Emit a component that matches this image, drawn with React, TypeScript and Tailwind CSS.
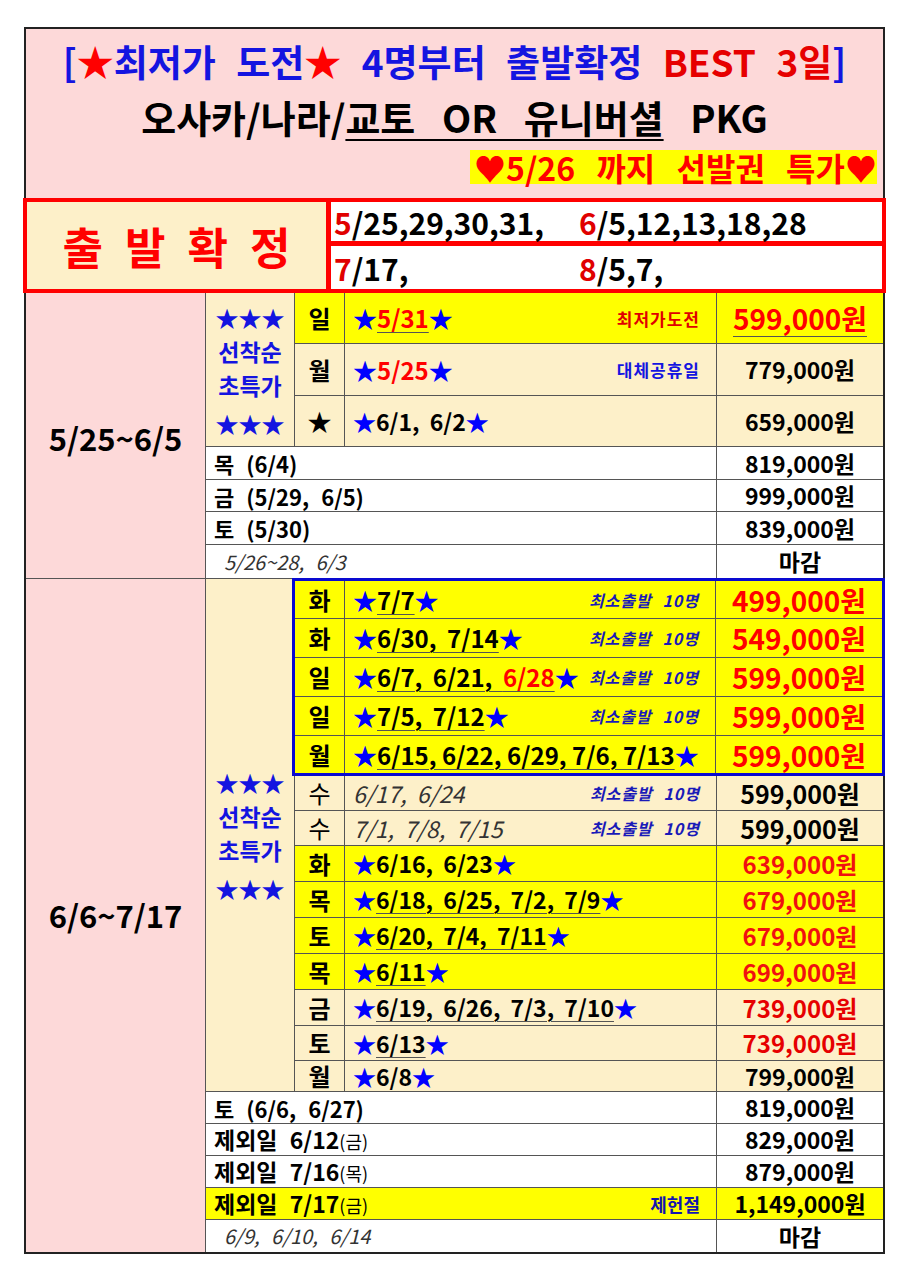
import React from "react";

const S = () => <span className="text-[#0000ff]">★</span>;

type RowProps = {
  h: string;
  bg: string;
  day: React.ReactNode;
  dates: React.ReactNode;
  note?: React.ReactNode;
  price: React.ReactNode;
};

function Row({ h, bg, day, dates, note, price }: RowProps) {
  return (
    <div className={`flex border-b border-[#555] ${h} ${bg}`}>
      <div className="w-[50px] shrink-0 border-r border-[#555] flex items-center justify-center font-bold text-[24px] leading-none">
        {day}
      </div>
      <div className="flex-1 min-w-0 flex items-center justify-between pl-2 pr-4 leading-none [word-spacing:5px]">
        {dates}
        {note}
      </div>
      <div className="w-[167px] shrink-0 border-l border-[#555] flex items-center justify-center leading-none">
        {price}
      </div>
    </div>
  );
}

function WideRow({ h, bg, label, note, price }: { h: string; bg: string; label: React.ReactNode; note?: React.ReactNode; price: React.ReactNode }) {
  return (
    <div className={`flex border-b border-[#555] last:border-b-0 ${h} ${bg}`}>
      <div className="flex-1 min-w-0 flex items-center justify-between pl-2 pr-4 leading-none [word-spacing:7px]">
        {label}
        {note}
      </div>
      <div className="w-[167px] shrink-0 border-l border-[#555] flex items-center justify-center leading-none">
        {price}
      </div>
    </div>
  );
}

const Note = ({ children }: { children: React.ReactNode }) => (
  <span className="text-[16px] font-bold italic text-[#1a1ab8] tracking-[1px] [word-spacing:6px] whitespace-nowrap">{children}</span>
);

const Stars3 = () => (
  <div className="flex flex-col items-center font-bold text-[#1414e0] text-[23px] leading-[34px]">
    <span>★★★</span>
    <span>선착순</span>
    <span>초특가</span>
    <span className="mt-1">★★★</span>
  </div>
);

const U = "underline underline-offset-4 decoration-1 decoration-[#555]";

export default function App() {
  return (
    <div className="min-h-screen bg-white pt-[27px] font-['Noto_Sans_CJK_KR','Noto_Sans',sans-serif] text-black">
      <div className="ml-[24px] w-[861px] border-2 border-[#222]">
        {/* 헤더 */}
        <div className="bg-[#fdd9d9] h-[169px] flex flex-col">
          <div className="text-center font-bold text-[37px] leading-none pt-[14px] text-[#1414e0] [word-spacing:12px] whitespace-nowrap">
            [<span className="text-[#ff0000]">★</span>최저가 도전<span className="text-[#ff0000]">★</span> 4명부터 출발확정{" "}
            <span className="text-[#e60000]">BEST 3일</span>]
          </div>
          <div className="text-center font-bold text-[38px] leading-none mt-[18px] [word-spacing:18px] whitespace-nowrap">
            오사카/나라/<span className="underline underline-offset-[6px] decoration-2">교토 OR 유니버셜</span> PKG
          </div>
          <div className="flex justify-end mt-[14px] pr-[6px]">
            <span className="bg-[#ffff00] text-[#ff0000] font-bold text-[32px] leading-[34px] pl-1 [word-spacing:14px] whitespace-nowrap">
              ♥5/26 까지 선발권 특가♥
            </span>
          </div>
        </div>

        {/* 출발확정 */}
        <div className="flex h-[95px] border-[4px] border-[#ff0000] -mx-[3px]">
          <div className="w-[304px] shrink-0 bg-[#fdf0c9] border-r-[5px] border-[#ff0000] flex items-center justify-center text-[#ff0000] font-bold text-[44px] tracking-[22px] pl-[22px]">
            출발확정
          </div>
          <div className="flex-1 flex flex-col bg-white">
            <div className="h-[44px] border-b-[5px] border-[#ff0000] flex items-center text-[30px] font-bold leading-none pl-[3px]">
              <span className="w-[245px]">
                <span className="text-[#e00000]">5</span>/25,29,30,31,
              </span>
              <span>
                <span className="text-[#e00000]">6</span>/5,12,13,18,28
              </span>
            </div>
            <div className="flex-1 flex items-center text-[30px] font-bold leading-none pl-[3px]">
              <span className="w-[245px]">
                <span className="text-[#e00000]">7</span>/17,
              </span>
              <span>
                <span className="text-[#e00000]">8</span>/5,7,
              </span>
            </div>
          </div>
        </div>

        {/* 5/25~6/5 */}
        <div className="flex border-b border-[#555]">
          <div className="w-[180px] shrink-0 bg-[#fdd9d9] border-r border-[#555] flex items-center justify-center font-bold text-[31px] pt-[6px]">
            5/25~6/5
          </div>
          <div className="flex-1 min-w-0 flex flex-col">
            <div className="flex">
              <div className="w-[89px] shrink-0 bg-[#fdf0c9] border-r border-[#555] border-b flex items-center justify-center">
                <Stars3 />
              </div>
              <div className="flex-1 min-w-0 flex flex-col">
                <Row
                  h="h-[51px]"
                  bg="bg-[#ffff00]"
                  day="일"
                  dates={
                    <span className="font-bold text-[24px]">
                      <S />
                      <span className={`text-[#ff0000] ${U}`}>5/31</span>
                      <S />
                    </span>
                  }
                  note={<span className="text-[17px] font-bold text-[#e00000] tracking-[1px]">최저가도전</span>}
                  price={
                    <span className="text-[28px] font-bold text-[#ff0000] underline underline-offset-[6px] decoration-1 decoration-[#555]">
                      599,000원
                    </span>
                  }
                />
                <Row
                  h="h-[52px]"
                  bg="bg-[#fdf0c9]"
                  day="월"
                  dates={
                    <span className="font-bold text-[24px]">
                      <S />
                      <span className="text-[#ff0000]">5/25</span>
                      <S />
                    </span>
                  }
                  note={<span className="text-[17px] font-bold text-[#1414e0] tracking-[1px]">대체공휴일</span>}
                  price={<span className="text-[23px] font-bold">779,000원</span>}
                />
                <Row
                  h="h-[51px]"
                  bg="bg-[#fdf0c9]"
                  day="★"
                  dates={
                    <span className="font-bold text-[23px]">
                      <S />
                      6/1, 6/2
                      <S />
                    </span>
                  }
                  price={<span className="text-[23px] font-bold">659,000원</span>}
                />
              </div>
            </div>
            <WideRow h="h-[33px]" bg="bg-white" label={<span className="font-bold text-[22px]">목 (6/4)</span>} price={<span className="text-[23px] font-bold">819,000원</span>} />
            <WideRow h="h-[32px]" bg="bg-white" label={<span className="font-bold text-[22px]">금 (5/29, 6/5)</span>} price={<span className="text-[23px] font-bold">999,000원</span>} />
            <WideRow h="h-[33px]" bg="bg-white" label={<span className="font-bold text-[22px]">토 (5/30)</span>} price={<span className="text-[23px] font-bold">839,000원</span>} />
            <WideRow
              h="h-[33px]"
              bg="bg-white"
              label={<span className="italic text-[20px] text-[#333] pl-[10px]">5/26~28, 6/3</span>}
              price={<span className="text-[23px] font-bold">마감</span>}
            />
          </div>
        </div>

        {/* 6/6~7/17 */}
        <div className="flex">
          <div className="w-[180px] shrink-0 bg-[#fdd9d9] border-r border-[#555] flex items-center justify-center font-bold text-[31px]">
            6/6~7/17
          </div>
          <div className="flex-1 min-w-0 flex flex-col">
            <div className="flex">
              <div className="w-[89px] shrink-0 bg-[#fdf0c9] border-r border-[#555] border-b flex items-center justify-center">
                <Stars3 />
              </div>
              <div className="flex-1 min-w-0 flex flex-col">
                <div className="border-[3px] border-[#0a0ad0] -ml-[3px] -mr-[2px] -mt-px">
                  <Row
                    h="h-[38px]"
                    bg="bg-[#ffff00]"
                    day="화"
                    dates={
                      <span className="font-bold text-[24px]">
                        <S />
                        <span className={U}>7/7</span>
                        <S />
                      </span>
                    }
                    note={<Note>최소출발 10명</Note>}
                    price={<span className="text-[28px] font-bold text-[#ff0000]">499,000원</span>}
                  />
                  <Row
                    h="h-[39px]"
                    bg="bg-[#ffff00]"
                    day="화"
                    dates={
                      <span className="font-bold text-[24px]">
                        <S />
                        <span className={U}>6/30, 7/14</span>
                        <S />
                      </span>
                    }
                    note={<Note>최소출발 10명</Note>}
                    price={<span className="text-[28px] font-bold text-[#ff0000]">549,000원</span>}
                  />
                  <Row
                    h="h-[39px]"
                    bg="bg-[#ffff00]"
                    day="일"
                    dates={
                      <span className="font-bold text-[24px] whitespace-nowrap">
                        <S />
                        <span className={U}>
                          6/7, 6/21, <span className="text-[#ff0000]">6/28</span>
                        </span>
                        <S />
                      </span>
                    }
                    note={<Note>최소출발 10명</Note>}
                    price={<span className="text-[28px] font-bold text-[#ff0000]">599,000원</span>}
                  />
                  <Row
                    h="h-[39px]"
                    bg="bg-[#ffff00]"
                    day="일"
                    dates={
                      <span className="font-bold text-[24px]">
                        <S />
                        <span className={U}>7/5, 7/12</span>
                        <S />
                      </span>
                    }
                    note={<Note>최소출발 10명</Note>}
                    price={<span className="text-[28px] font-bold text-[#ff0000]">599,000원</span>}
                  />
                  <Row
                    h="h-[37px]"
                    bg="bg-[#ffff00] border-b-0"
                    day="월"
                    dates={
                      <span className="font-bold text-[24px] whitespace-nowrap [word-spacing:0px]">
                        <S />
                        <span className={U}>6/15, 6/22, 6/29, 7/6, 7/13</span>
                        <S />
                      </span>
                    }
                    price={<span className="text-[28px] font-bold text-[#ff0000]">599,000원</span>}
                  />
                </div>
                <Row
                  h="h-[35px]"
                  bg="bg-[#fdf0c9]"
                  day={<span className="font-normal">수</span>}
                  dates={<span className="italic text-[23px] text-[#333]">6/17, 6/24</span>}
                  note={<Note>최소출발 10명</Note>}
                  price={<span className="text-[25px] font-bold">599,000원</span>}
                />
                <Row
                  h="h-[35px]"
                  bg="bg-[#fdf0c9]"
                  day={<span className="font-normal">수</span>}
                  dates={<span className="italic text-[23px] text-[#333]">7/1, 7/8, 7/15</span>}
                  note={<Note>최소출발 10명</Note>}
                  price={<span className="text-[25px] font-bold">599,000원</span>}
                />
                <Row
                  h="h-[36px]"
                  bg="bg-[#ffff00]"
                  day="화"
                  dates={
                    <span className="font-bold text-[23px]">
                      <S />
                      6/16, 6/23
                      <S />
                    </span>
                  }
                  price={<span className="text-[24px] font-bold text-[#f01010]">639,000원</span>}
                />
                <Row
                  h="h-[36px]"
                  bg="bg-[#ffff00]"
                  day="목"
                  dates={
                    <span className="font-bold text-[23px]">
                      <S />
                      <span className={U}>6/18, 6/25, 7/2, 7/9</span>
                      <S />
                    </span>
                  }
                  price={<span className="text-[24px] font-bold text-[#f01010]">679,000원</span>}
                />
                <Row
                  h="h-[36px]"
                  bg="bg-[#ffff00]"
                  day="토"
                  dates={
                    <span className="font-bold text-[23px]">
                      <S />
                      <span className={U}>6/20, 7/4, 7/11</span>
                      <S />
                    </span>
                  }
                  price={<span className="text-[24px] font-bold text-[#f01010]">679,000원</span>}
                />
                <Row
                  h="h-[36px]"
                  bg="bg-[#ffff00]"
                  day="목"
                  dates={
                    <span className="font-bold text-[23px]">
                      <S />
                      <span className={U}>6/11</span>
                      <S />
                    </span>
                  }
                  price={<span className="text-[24px] font-bold text-[#f01010]">699,000원</span>}
                />
                <Row
                  h="h-[36px]"
                  bg="bg-[#fdf0c9]"
                  day="금"
                  dates={
                    <span className="font-bold text-[23px]">
                      <S />
                      <span className={U}>6/19, 6/26, 7/3, 7/10</span>
                      <S />
                    </span>
                  }
                  price={<span className="text-[24px] font-bold text-[#e60000]">739,000원</span>}
                />
                <Row
                  h="h-[35px]"
                  bg="bg-[#fdf0c9]"
                  day="토"
                  dates={
                    <span className="font-bold text-[23px]">
                      <S />
                      <span className={U}>6/13</span>
                      <S />
                    </span>
                  }
                  price={<span className="text-[24px] font-bold text-[#e60000]">739,000원</span>}
                />
                <Row
                  h="h-[31px]"
                  bg="bg-[#fdf0c9]"
                  day="월"
                  dates={
                    <span className="font-bold text-[23px]">
                      <S />
                      6/8
                      <S />
                    </span>
                  }
                  price={<span className="text-[23px] font-bold">799,000원</span>}
                />
              </div>
            </div>
            <WideRow h="h-[32px]" bg="bg-white" label={<span className="font-bold text-[22px]">토 (6/6, 6/27)</span>} price={<span className="text-[23px] font-bold">819,000원</span>} />
            <WideRow
              h="h-[32px]"
              bg="bg-white"
              label={
                <span className="font-bold text-[23px]">
                  제외일 6/12<span className="font-normal text-[18px]">(금)</span>
                </span>
              }
              price={<span className="text-[23px] font-bold">829,000원</span>}
            />
            <WideRow
              h="h-[32px]"
              bg="bg-white"
              label={
                <span className="font-bold text-[23px]">
                  제외일 7/16<span className="font-normal text-[18px]">(목)</span>
                </span>
              }
              price={<span className="text-[23px] font-bold">879,000원</span>}
            />
            <WideRow
              h="h-[32px]"
              bg="bg-[#ffff00]"
              label={
                <span className="font-bold text-[23px]">
                  제외일 7/17<span className="font-normal text-[18px]">(금)</span>
                </span>
              }
              note={<span className="text-[18px] font-bold text-[#1414b0]">제헌절</span>}
              price={<span className="text-[23px] font-bold">1,149,000원</span>}
            />
            <WideRow
              h="h-[32px]"
              bg="bg-white"
              label={<span className="italic text-[20px] text-[#333] pl-[10px]">6/9, 6/10, 6/14</span>}
              price={<span className="text-[23px] font-bold">마감</span>}
            />
          </div>
        </div>
      </div>
    </div>
  );
}
